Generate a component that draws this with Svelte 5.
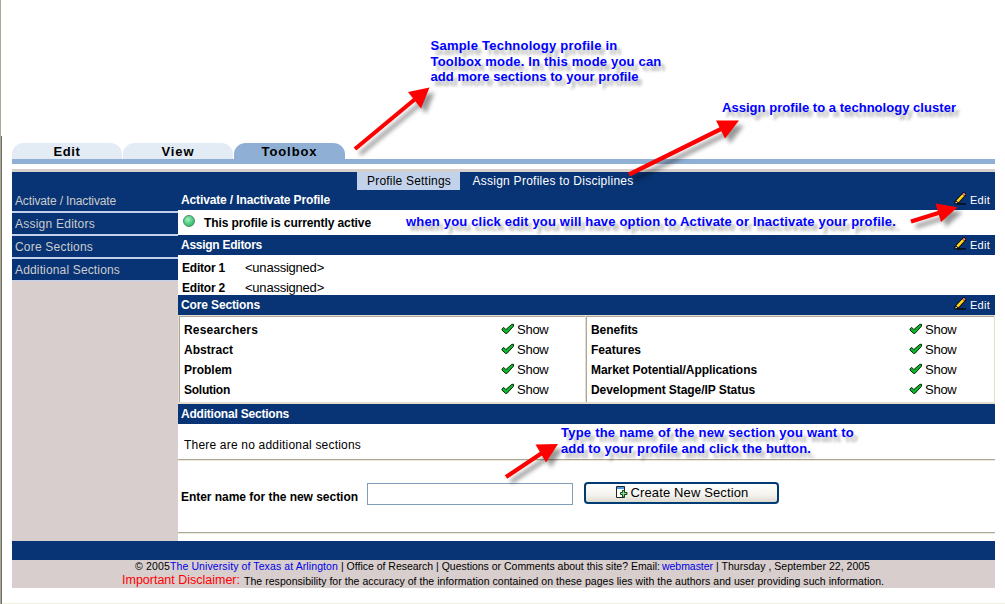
<script>
  const tabs = [
    { label: 'Edit', width: 27 },
    { label: 'View', width: 33 },
    { label: 'Toolbox', width: 56, active: true }
  ];
  const side = [
    { label: 'Activate / Inactivate', width: 101 },
    { label: 'Assign Editors', width: 80 },
    { label: 'Core Sections', width: 78 },
    { label: 'Additional Sections', width: 105 }
  ];
  const core = [
    [
      { label: 'Researchers', width: 74 },
      { label: 'Abstract', width: 49 },
      { label: 'Problem', width: 48 },
      { label: 'Solution', width: 46 }
    ],
    [
      { label: 'Benefits', width: 47 },
      { label: 'Features', width: 50 },
      { label: 'Market Potential/Applications', width: 166 },
      { label: 'Development Stage/IP Status', width: 164 }
    ]
  ];
  const arrows = [
    { line: [355, 149, 417, 97.5], head: '429.5,87.5 408,92 421,108.5' },
    { line: [629, 174.5, 722, 128.5], head: '739,120.5 716,120.5 725,138.5' },
    { line: [911, 221.5, 940, 212.5], head: '957.5,207.3 935.5,203.5 941,222' },
    { line: [506, 477, 542, 453], head: '558,444 535.5,444.5 546,462.5' }
  ];

  // Spreads the letters of a label so that it takes up the given width.
  function fit(node, width) {
    const natural = node.getBoundingClientRect().width;
    node.style.letterSpacing = (width - natural) / node.textContent.length + 'px';
  }
</script>

{#snippet pencil()}
  <svg class="pencil" width="13" height="13" viewBox="0 0 13 13">
    <path d="M3 12H12" stroke="#000" stroke-width="1.2" />
    <path d="M.5 12.500V9.500L8.500 1 9.800 0 12 1.800V3.200L4 12Z" fill="#000" />
    <path d="M2.300 8.800 8.300 2.300 10.300 4 4.300 10.600Z" fill="#ffc800" />
    <path d="M3 8.900 8.900 2.700" stroke="#fff27a" stroke-width=".8" />
    <path d="M8.500 2 9.800.7 11.600 2.300 10.500 3.700Z" fill="#ff8a8a" />
    <path d="M1.300 11.300 1.800 9.600 3.500 11Z" fill="#fff" />
  </svg>
{/snippet}

{#snippet check()}
  <svg class="check" width="14" height="12" viewBox="0 0 14 12">
    <path d="M1 6 2.600 4.300 4.800 6.600 10.800 1.300H12.500V3.200L6 10.400H4.600L1 7.200Z" fill="#12b32c" stroke="#062d0b" stroke-width="1" />
  </svg>
{/snippet}

{#snippet header(label, width, edit)}
  <div class="head">
    <b use:fit={width}>{label}</b>
    {#if edit}<a class="edit" href="#edit">{@render pencil()}<span use:fit={20}>Edit</span></a>{/if}
  </div>
{/snippet}

<div class="page">
  <nav class="tabs">
    {#each tabs as t}
      <div class="tab" class:active={t.active}><span use:fit={t.width}>{t.label}</span></div>
    {/each}
  </nav>
  <div class="rule"></div>

  <div class="subnav">
    <span class="sub on"><span use:fit={84}>Profile Settings</span></span>
    <span class="sub"><span use:fit={161}>Assign Profiles to Disciplines</span></span>
  </div>

  <div class="body">
    <aside>
      {#each side as s}
        <div class="item"><span use:fit={s.width}>{s.label}</span></div>
      {/each}
    </aside>
    <main>
      {@render header('Activate / Inactivate Profile', 149, true)}
      <div class="status">
        <i class="dot"></i><b use:fit={167}>This profile is currently active</b>
      </div>
      {@render header('Assign Editors', 81, true)}
      <div class="editors">
        {#each [1, 2] as n}
          <div class="editor"><b><span use:fit={43}>Editor {n}</span></b><span class="large" use:fit={79}>&lt;unassigned&gt;</span></div>
        {/each}
      </div>
      {@render header('Core Sections', 79, true)}
      <div class="core">
        {#each core as column}
          <div class="cell">
            {#each column as c}
              <div class="line"><b><span use:fit={c.width}>{c.label}</span></b>{@render check()}<span class="large" use:fit={31.5}>Show</span></div>
            {/each}
          </div>
        {/each}
      </div>
      {@render header('Additional Sections', 108, false)}
      <div class="none"><span use:fit={177}>There are no additional sections</span></div>
      <div class="create">
        <b><span use:fit={177}>Enter name for the new section</span></b>
        <input type="text" aria-label="Section name" />
        <button>
          <svg width="13" height="13" viewBox="0 0 13 13">
            <path d="M1.500.5H9.500V11.500H1.500Z" fill="#fff" stroke="#222" />
            <path d="M2 2H9" stroke="#3f9be0" stroke-width="2" />
            <path d="M7.500 4.500h2v2h2.500v2H9.500v2.500h-2V8.500H5.500v-2h2Z" fill="#8fdc92" stroke="#14451b" />
          </svg>
          <span use:fit={118}>Create New Section</span>
        </button>
      </div>
    </main>
  </div>

  <div class="band"></div>
  <footer>
    <div class="l1">
      <span use:fit={35}>© 2005</span><a href="#uta" use:fit={168}>The University of Texas at Arlington</a><span class="rest" use:fit={319}>| Office of Research | Questions or Comments about this site? Email:</span><a class="wm" href="#mail" use:fit={51}>webmaster</a><span class="rest" use:fit={154}>| Thursday , September 22, 2005</span>
    </div>
    <div class="l2">
      <span class="important" use:fit={118}>Important Disclaimer:</span><span use:fit={640}>The responsibility for the accuracy of the information contained on these pages lies with the authors and user providing such information.</span>
    </div>
  </footer>
</div>

<div class="frame-left"></div>
<div class="frame-bottom"></div>

<div class="note n1">
  <div><span use:fit={187}>Sample Technology profile in</span></div>
  <div><span use:fit={231}>Toolbox mode. In this mode you can</span></div>
  <div><span use:fit={208}>add more sections to your profile</span></div>
</div>
<div class="note n2"><span use:fit={234}>Assign profile to a technology cluster</span></div>
<div class="note n3"><span use:fit={490}>when you click edit you will have option to Activate or Inactivate your profile.</span></div>
<div class="note n4">
  <div><span use:fit={293}>Type the name of the new section you want to</span></div>
  <div><span use:fit={250}>add to your profile and click the button.</span></div>
</div>

<svg class="arrows" width="1005" height="604" viewBox="0 0 1005 604">
  {#each arrows as a}
    <g>
      <line x1={a.line[0]} y1={a.line[1]} x2={a.line[2]} y2={a.line[3]} stroke="#f00" stroke-width="4.2" />
      <polygon points={a.head} fill="#f00" />
    </g>
  {/each}
</svg>

<style>
  :global(body) {
    background: #fff;
    font: 12px 'Liberation Sans', Arial, sans-serif;
    color: #000;
    overflow: hidden;
  }
  .page { box-sizing: border-box; width: 995px; height: 604px; padding: 143px 0 0 12px; }
  span, b, a { white-space: nowrap; }
  a { text-decoration: none; }
  .large { font-size: 13px; }
  .tabs { display: flex; height: 16px; gap: 1px; }
  .tab {
    width: 110px; height: 16px; line-height: 17px; text-align: center;
    background: #e3ebf5; border-radius: 12px 12px 0 0 / 11px 11px 0 0;
    font-weight: bold; font-size: 13px;
  }
  .tab.active { background: #8fb0d4; width: 111px; }
  .rule { height: 5px; background: #8fb0d4; margin-bottom: 5px; }
  .subnav {
    display: flex; height: 18px; line-height: 18px; padding-left: 345px;
    border-top: 3px solid #d7cfcc; background: #083475; color: #fff;
  }
  .sub { padding: 0 9px 0 10px; }
  .sub.on { background: #c1d2ea; color: #000; width: 84px; margin-right: 2.5px; }
  .body { display: flex; height: 351px; }
  aside { width: 166px; background: #d7cecd; }
  .item {
    box-sizing: border-box; height: 23px; line-height: 23px; padding-left: 3px;
    background: #083475; color: #ccc; border-bottom: 2px solid #c1d2ea;
  }
  .item:last-child { height: 22px; border-bottom-width: 1px; }
  main { width: 817px; background: #fff; }
  .head {
    display: flex; justify-content: space-between; height: 20px; line-height: 20px;
    padding: 0 5px 0 3px; background: #083475; color: #fff;
  }
  .edit { display: flex; color: #fff; font-size: 11px; gap: 3px; line-height: 21px; }
  .pencil { margin-top: 2px; }
  .status { display: flex; align-items: center; height: 25px; padding-left: 5px; }
  .dot {
    width: 10px; height: 10px; margin: -3px 9px 0 0; border: 1px solid #4c8c6a; border-radius: 50%;
    background: radial-gradient(circle at 40% 35%, #a5f0bd, #4fce83 50%, #2d9a5c);
  }
  .editors { height: 37px; padding: 3px 0 0 4px; overflow: hidden; }
  .editor { display: flex; height: 20px; line-height: 20px; }
  .editor b { width: 63px; }
  .core {
    box-sizing: border-box; display: grid; grid-template-columns: 406px 408px; gap: 1px;
    height: 89px; padding: 1px 1px 2px; background: #e4dfcd;
  }
  .cell {
    border: solid #aca899; border-width: 1px 0 0 1px; background: #fff;
    padding: 3px 0 0 4px; overflow: hidden;
  }
  .line { display: flex; height: 20px; line-height: 20px; }
  .line b { width: 317px; }
  .cell + .cell .line b { width: 318px; }
  .check { margin: 3px 2px 0 0; }
  .none {
    box-sizing: border-box; height: 37px; line-height: 42px; padding-left: 6px;
    border-bottom: 1px solid #ece9d8; box-shadow: inset 0 -1px #aca899;
  }
  .create {
    box-sizing: border-box; display: flex; height: 73px; padding: 21px 0 0 3px;
    border-bottom: 1px solid #ece9d8; box-shadow: inset 0 -1px #aca899;
  }
  .create b { width: 186px; line-height: 30px; }
  input { box-sizing: border-box; width: 206px; height: 22px; margin: 1px 11px 0 0; border: 1px solid #7f9db9; padding: 0; }
  button {
    box-sizing: border-box; display: flex; align-items: center; justify-content: center; gap: 3px;
    width: 195px; height: 22px; padding: 0 0 1px; border: 2px solid #003c74; border-radius: 4px;
    background: linear-gradient(#fff, #f4f3ee 60%, #dedbd0);
    font: 13px 'Liberation Sans', Arial, sans-serif; color: #000;
  }
  .band { height: 19px; background: #083475; }
  footer { height: 28px; background: #d7cecd; font-size: 10.5px; }
  footer a { color: #0000e6; }
  .l1 { display: flex; height: 13px; line-height: 13px; padding-left: 123px; }
  .rest { margin-left: 3px; }
  .wm { margin-left: 2px; }
  .l2 { display: flex; height: 15px; line-height: 17px; padding-left: 110px; }
  .important { font-size: 12.5px; line-height: 15px; color: #f00; margin-right: 4px; }
  .frame-left {
    position: absolute; left: 0; top: 0; width: 1px; height: 604px; background: #aca899;
  }
  .frame-left::after {
    content: ''; position: absolute; left: 1px; top: 136px; width: 1px; height: 468px; background: #716f64;
  }
  .frame-bottom { position: absolute; left: 2px; top: 603px; width: 1003px; height: 1px; background: #f1efe2; }
  .note {
    position: absolute; font-weight: bold; font-size: 13px; line-height: 15.7px; color: #00f;
    text-shadow: 4px 5px 3px rgba(0, 0, 0, 0.3);
  }
  .n1 { left: 430.5px; top: 38px; }
  .n2 { left: 722px; top: 100px; }
  .n3 { left: 406px; top: 214px; }
  .n4 { left: 561px; top: 425px; }
  .arrows { position: absolute; left: 0; top: 0; pointer-events: none; }
  .arrows g { filter: drop-shadow(5px 5px 2px rgba(0, 0, 0, 0.4)); }
</style>
